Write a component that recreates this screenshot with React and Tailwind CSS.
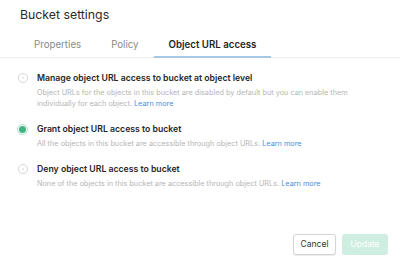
import React from "react";

function Radio({ checked }) {
    if (checked) {
        return (
            <span className="w-[11px] h-[11px] rounded-full border border-[#a7e0c5] bg-white flex items-center justify-center shrink-0">
                <span className="w-[7px] h-[7px] rounded-full bg-[#3fb57f]"></span>
            </span>
        );
    }
    return (
        <span className="w-[10px] h-[10px] rounded-full border border-[#d6d6d6] bg-white flex items-center justify-center shrink-0">
            <span className="w-[2px] h-[2px] rounded-full bg-[#e2e2e2]"></span>
        </span>
    );
}

function Option({ checked, title, children }) {
    return (
        <div className="flex gap-[9px]">
            <div className="pt-[1px] w-[11px] flex justify-center">
                <Radio checked={checked} />
            </div>
            <div>
                <div className="text-[8.7px] font-semibold text-[#262626] leading-[12px]">{title}</div>
                <div className="text-[7.3px] text-[#b5b5b5] leading-[11px] mt-[2.5px]">{children}</div>
            </div>
        </div>
    );
}

export default function App() {
    const learn = <span className="text-[#4a90d9]">Learn more</span>;
    return (
        <div className="w-[400px] h-[267px] bg-white flex flex-col font-['Inter',sans-serif] overflow-hidden">
            <div className="px-[20px] pt-[7px] text-[12.3px] text-[#2b2b2b] leading-[15px]">Bucket settings</div>
            <div className="mt-[17px] flex border-b border-[#ececec] pl-[19px] text-[9.7px] leading-[12px]">
                <div className="pb-[5px] px-[15px] text-[#8a8a8a]">Properties</div>
                <div className="pb-[5px] px-[15px] text-[#8a8a8a]">Policy</div>
                <div className="pb-[5px] px-[15px] font-semibold text-[#1f1f1f] border-b-2 border-[#a6c8e4] -mb-[1px]">Object URL access</div>
            </div>
            <div className="pl-[17px] pr-[20px] pt-[14px] flex flex-col gap-[14.5px]">
                <Option title="Manage object URL access to bucket at object level">
                    Object URLs for the objects in this bucket are disabled by default but you can enable them
                    <br />individually for each object. {learn}
                </Option>
                <Option checked title="Grant object URL access to bucket">
                    All the objects in this bucket are accessible through object URLs. {learn}
                </Option>
                <Option title="Deny object URL access to bucket">
                    None of the objects in this bucket are accessible through object URLs. {learn}
                </Option>
            </div>
            <div className="mt-auto flex justify-end gap-[6px] pr-[12px] pb-[12px]">
                <button className="h-[21px] w-[43px] rounded-[3px] border border-[#d4d4d4] bg-white text-[8.5px] text-[#333] shadow-[0_1px_1px_rgba(0,0,0,0.08)]">Cancel</button>
                <button className="h-[21px] w-[46px] rounded-[3px] bg-[#cdeee0] text-[8.5px] text-white">Update</button>
            </div>
        </div>
    );
}
